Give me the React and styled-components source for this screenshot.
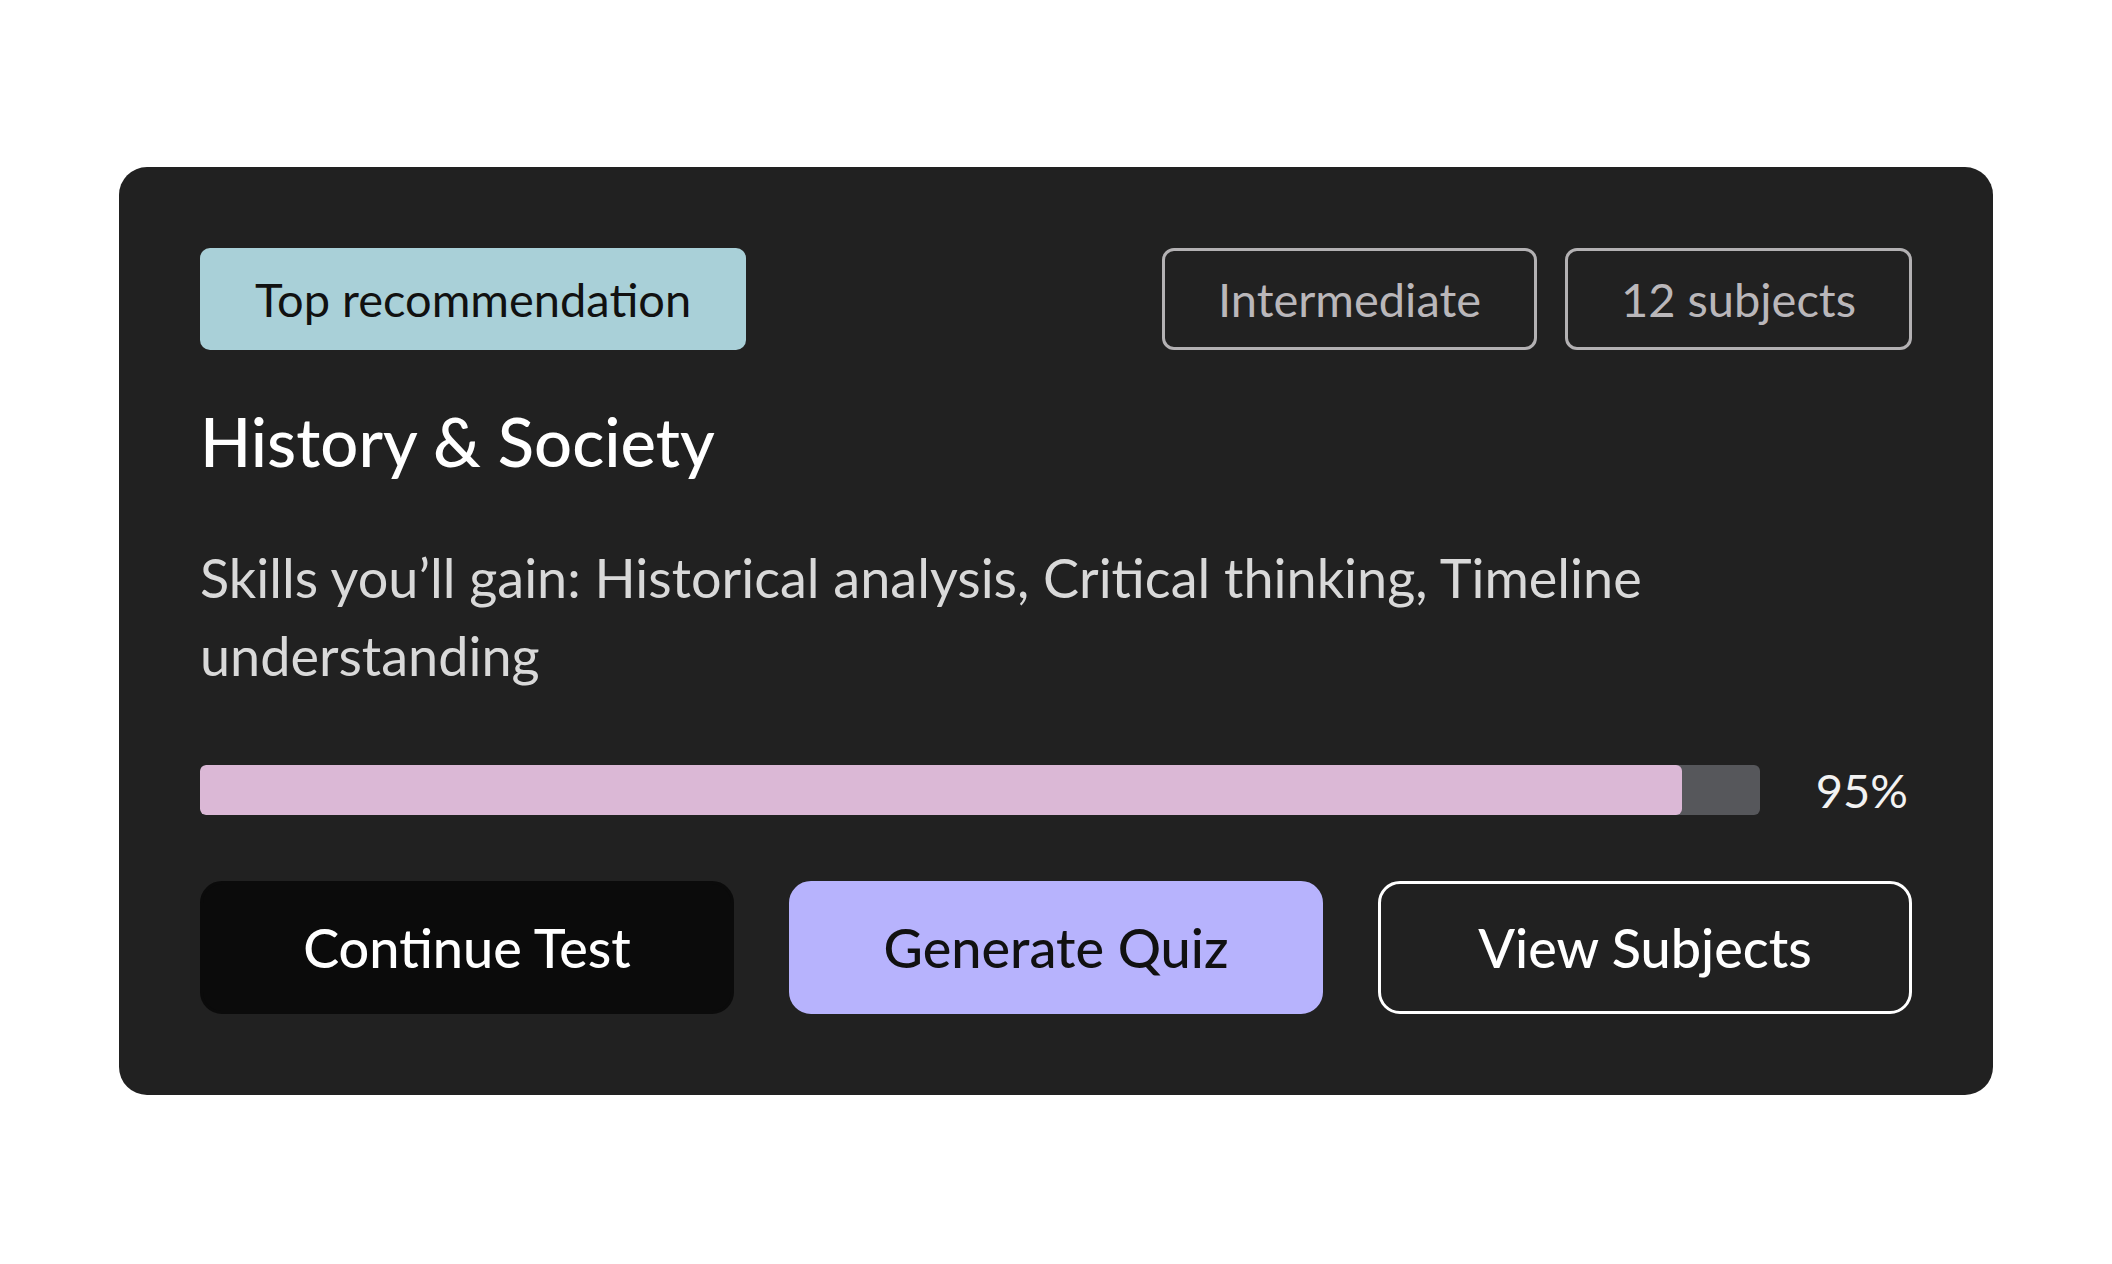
import React from "react";
import styled, { createGlobalStyle } from "styled-components";

const Global = createGlobalStyle`
  html, body { margin: 0; padding: 0; background: #ffffff; }
  body { font-family: Lato, "Open Sans", sans-serif; }
  * { box-sizing: border-box; }
`;

const Page = styled.div`
  width: 2112px;
  min-height: 1264px;
  padding: 167px 119px 0 119px;
  display: flex;
  align-items: flex-start;
`;

const Card = styled.section`
  width: 1875px;
  background: #212121;
  border-radius: 28px;
  padding: 81px;
  display: flex;
  flex-direction: column;
`;

const TopRow = styled.div`
  display: flex;
  justify-content: space-between;
  align-items: center;
`;

const Badge = styled.span`
  display: inline-flex;
  align-items: center;
  height: 102px;
  padding: 0 55px;
  border-radius: 10px;
  background: #a9d0d8;
  color: #111111;
  font-size: 47px;
`;

const Tags = styled.div`
  display: flex;
  gap: 28px;
`;

const Tag = styled.span`
  display: inline-flex;
  align-items: center;
  justify-content: center;
  height: 102px;
  width: ${(p) => p.$w}px;
  border: 3px solid #b3b1b3;
  border-radius: 12px;
  color: #bab7ba;
  font-size: 47px;
`;

const Title = styled.h2`
  margin: 51px 0 0 0;
  font-weight: 500;
  font-size: 67px;
  line-height: 80px;
  color: #ffffff;
`;

const Skills = styled.p`
  margin: 58px 0 0 0;
  font-size: 54px;
  line-height: 78px;
  color: #d9d9d9;
`;

const ProgressRow = styled.div`
  margin-top: 70px;
  display: flex;
  align-items: center;
  gap: 56px;
`;

const Track = styled.div`
  flex: 1;
  height: 50px;
  border-radius: 6px;
  background: #56575b;
  overflow: hidden;
`;

const Fill = styled.div`
  height: 100%;
  background: #dbb8d6;
  border-radius: 6px;
`;

const Percent = styled.span`
  color: #f2f2f2;
  font-size: 47px;
  line-height: 50px;
  margin-right: 4px;
`;

const Actions = styled.div`
  margin-top: 66px;
  display: grid;
  grid-template-columns: repeat(3, 1fr);
  gap: 55px;
`;

const variants = {
  dark: "background:#0b0b0b;color:#ffffff;border:3px solid #0b0b0b;",
  primary: "background:#b7b3fd;color:#111111;border:3px solid #b7b3fd;",
  outline: "background:transparent;color:#ffffff;border:3px solid #ffffff;",
};

const Button = styled.button`
  height: 133px;
  border-radius: 22px;
  font-family: Lato, sans-serif;
  font-size: 54px;
  font-weight: 500;
  cursor: pointer;
  ${(p) => variants[p.$variant]}
`;

export default function App() {
  const pct = 95;
  return (
    <>
      <Global />
      <Page>
        <Card>
          <TopRow>
            <Badge>Top recommendation</Badge>
            <Tags>
              <Tag $w={375}>Intermediate</Tag>
              <Tag $w={347}>12 subjects</Tag>
            </Tags>
          </TopRow>
          <Title>History &amp; Society</Title>
          <Skills>
            Skills you’ll gain: Historical analysis, Critical thinking, Timeline understanding
          </Skills>
          <ProgressRow>
            <Track>
              <Fill style={{ width: `${pct}%` }} />
            </Track>
            <Percent>{pct}%</Percent>
          </ProgressRow>
          <Actions>
            <Button $variant="dark">Continue Test</Button>
            <Button $variant="primary">Generate Quiz</Button>
            <Button $variant="outline">View Subjects</Button>
          </Actions>
        </Card>
      </Page>
    </>
  );
}
